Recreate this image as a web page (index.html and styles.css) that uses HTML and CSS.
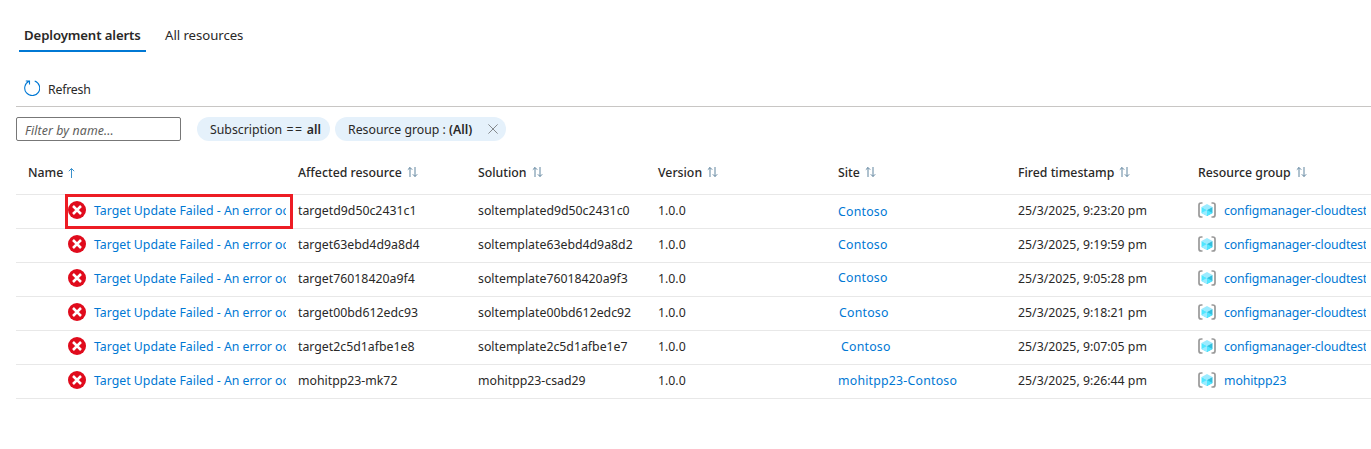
FILE: index.html
```
<!DOCTYPE html>
<html lang="en">
<head>
<meta charset="utf-8">
<title>Deployment alerts</title>
<link rel="stylesheet" href="styles.css">
</head>
<body>
<svg class="defs" aria-hidden="true">
  <defs>
    <symbol id="sort" viewBox="0 0 11 12"><path d="M3 11V1.5M.8 3.7 3 1.5 5.2 3.7M8 1v9.5M5.8 8.3 8 10.5 10.2 8.3" fill="none" stroke="currentColor"/></symbol>
    <symbol id="error" viewBox="0 0 18 18"><circle cx="9" cy="9" r="9" fill="#e00b1c"/><path d="m5 5 8 8M13 5l-8 8" stroke="#fff" stroke-width="2.5"/></symbol>
    <symbol id="group" viewBox="0 0 18 16"><path d="M4.5 1H3.2Q1 1 1 3v10q0 2 2.2 2h1.3M13.5 1h1.3Q17 1 17 3v10q0 2-2.2 2h-1.3" fill="none" stroke="#999" stroke-width="1.7"/><path d="m9 2 5.5 3L9 8 3.5 5z" fill="#9cebff"/><path d="M3.5 5 9 8v6l-5.500-3z" fill="#50e6ff"/><path d="M14.500 5 9 8v6l5.500-3z" fill="#32bedd"/><path d="m3.500 11 5.500-3v6z" fill="#9cebff"/><path d="m14.500 11-5.500-3v6z" fill="#50e6ff"/></symbol>
  </defs>
</svg>
<nav class="tabs">
  <a class="tab tab-active"><span>Deployment alerts</span></a>
  <a class="tab"><span>All resources</span></a>
</nav>
<div class="toolbar">
  <svg class="refresh-icon" viewBox="0 0 16 16"><path d="M10.7 1A7.5 7.5 0 1 1 5 1.300M1.800 1H5.500V4.600" fill="none" stroke="#0078d4" stroke-width="1.1"/></svg>
  <span class="refresh-label">Refresh</span>
</div>
<div class="filters">
  <div class="search"><span>Filter by name...</span></div>
  <div class="pill pill-sub"><span>Subscription <i class="op">==</i> <b>all</b></span></div>
  <div class="pill pill-group"><span>Resource group : <b>(All)</b></span><svg class="close" viewBox="0 0 10 10"><path d="m.4.4 9.2 9.2M9.6.4.4 9.6" stroke="#85898d"/></svg></div>
</div>
<main class="grid">
  <div class="row head">
    <div class="cell"><span>Name</span><svg class="sort-up" viewBox="0 0 7 12"><path d="M3.5 11V1.5M.8 4.2l2.7-2.7 2.7 2.7" fill="none" stroke="currentColor"/></svg></div>
    <div class="cell"><span>Affected resource</span><svg class="sort"><use href="#sort"/></svg></div>
    <div class="cell"><span>Solution</span><svg class="sort"><use href="#sort"/></svg></div>
    <div class="cell"><span>Version</span><svg class="sort"><use href="#sort"/></svg></div>
    <div class="cell"><span>Site</span><svg class="sort"><use href="#sort"/></svg></div>
    <div class="cell"><span>Fired timestamp</span><svg class="sort"><use href="#sort"/></svg></div>
    <div class="cell"><span>Resource group</span><svg class="sort"><use href="#sort"/></svg></div>
  </div>
  <div class="row">
    <div class="cell name"><svg class="error"><use href="#error"/></svg><a>Target Update Failed - An error oc</a></div>
    <div class="cell"><span>targetd9d50c2431c1</span></div>
    <div class="cell"><span>soltemplated9d50c2431c0</span></div>
    <div class="cell"><span>1.0.0</span></div>
    <div class="cell site drop"><a>Contoso</a></div>
    <div class="cell"><span>25/3/2025, 9:23:20 pm</span></div>
    <div class="cell group"><svg class="cube"><use href="#group"/></svg><a>configmanager-cloudtest</a></div>
    <div class="highlight"></div>
  </div>
  <div class="row">
    <div class="cell name"><svg class="error"><use href="#error"/></svg><a>Target Update Failed - An error oc</a></div>
    <div class="cell"><span>target63ebd4d9a8d4</span></div>
    <div class="cell"><span>soltemplate63ebd4d9a8d2</span></div>
    <div class="cell"><span>1.0.0</span></div>
    <div class="cell site"><a>Contoso</a></div>
    <div class="cell"><span>25/3/2025, 9:19:59 pm</span></div>
    <div class="cell group"><svg class="cube"><use href="#group"/></svg><a>configmanager-cloudtest</a></div>
  </div>
  <div class="row">
    <div class="cell name"><svg class="error"><use href="#error"/></svg><a>Target Update Failed - An error oc</a></div>
    <div class="cell"><span>target76018420a9f4</span></div>
    <div class="cell"><span>soltemplate76018420a9f3</span></div>
    <div class="cell"><span>1.0.0</span></div>
    <div class="cell site raise"><a>Contoso</a></div>
    <div class="cell"><span>25/3/2025, 9:05:28 pm</span></div>
    <div class="cell group"><svg class="cube"><use href="#group"/></svg><a>configmanager-cloudtest</a></div>
  </div>
  <div class="row">
    <div class="cell name"><svg class="error"><use href="#error"/></svg><a>Target Update Failed - An error oc</a></div>
    <div class="cell"><span>target00bd612edc93</span></div>
    <div class="cell"><span>soltemplate00bd612edc92</span></div>
    <div class="cell"><span>1.0.0</span></div>
    <div class="cell site indent-1"><a>Contoso</a></div>
    <div class="cell"><span>25/3/2025, 9:18:21 pm</span></div>
    <div class="cell group"><svg class="cube"><use href="#group"/></svg><a>configmanager-cloudtest</a></div>
  </div>
  <div class="row">
    <div class="cell name"><svg class="error"><use href="#error"/></svg><a>Target Update Failed - An error oc</a></div>
    <div class="cell"><span>target2c5d1afbe1e8</span></div>
    <div class="cell"><span>soltemplate2c5d1afbe1e7</span></div>
    <div class="cell"><span>1.0.0</span></div>
    <div class="cell site indent-3"><a>Contoso</a></div>
    <div class="cell"><span>25/3/2025, 9:07:05 pm</span></div>
    <div class="cell group"><svg class="cube"><use href="#group"/></svg><a>configmanager-cloudtest</a></div>
  </div>
  <div class="row">
    <div class="cell name"><svg class="error"><use href="#error"/></svg><a>Target Update Failed - An error oc</a></div>
    <div class="cell"><span>mohitpp23-mk72</span></div>
    <div class="cell"><span>mohitpp23-csad29</span></div>
    <div class="cell"><span>1.0.0</span></div>
    <div class="cell site"><a>mohitpp23-Contoso</a></div>
    <div class="cell"><span>25/3/2025, 9:26:44 pm</span></div>
    <div class="cell group"><svg class="cube"><use href="#group"/></svg><a>mohitpp23</a></div>
  </div>
</main>
</body>
</html>
```
FILE: styles.css
```
* { box-sizing: border-box; }
body {
  margin: 0;
  height: 449px;
  overflow: hidden;
  background: #fff;
  color: #292827;
  font: 12.3px/18px "Noto Sans", "Open Sans", sans-serif;
  white-space: nowrap;
}
svg { flex: none; display: block; }
.defs { position: absolute; width: 0; height: 0; }
.tabs { display: flex; gap: 14px; height: 52px; padding: 20px 0 0 19px; font-size: 13.2px; }
.tab { height: 32px; padding: 6px 5px 0; border-bottom: 2px solid transparent; letter-spacing: -.05px; }
.tab-active { width: 127px; border-color: #0078d4; font-weight: 600; letter-spacing: -.12px; }
.toolbar { display: flex; align-items: center; gap: 8px; height: 55px; margin-left: 16px; padding: 21px 0 0 8px; border-bottom: 1px solid #c8c6c4; }
.refresh-icon { width: 16px; height: 16px; margin-top: -3px; }
.refresh-label { letter-spacing: -.2px; }
.filters { display: flex; height: 44px; padding: 10px 0 0 16px; }
.search { width: 165px; height: 24px; padding: 4px 8px 0; border: 1px solid #777; border-radius: 2px; color: #605e5c; font-style: italic; letter-spacing: .12px; }
.pill { display: flex; align-items: center; height: 24px; padding-left: 13px; border-radius: 12px; background: #e5f1fb; }
.pill span { padding-top: 1px; }
.pill b { font-weight: 600; }
.op { font-style: normal; letter-spacing: 1.6px; margin-left: 1px; }
.pill-sub { width: 133px; margin-left: 16px; }
.pill-group { width: 171px; margin-left: 5px; }
.close { width: 10px; height: 10px; margin: 0 8px 0 auto; }
.grid { padding-left: 16px; }
.row { position: relative; display: grid; grid-template-columns: 270px repeat(6, 180px); height: 34px; border-bottom: 1px solid #e8e8e8; }
.head { height: 44px; font-weight: 500; }
.cell { display: flex; align-items: center; overflow: hidden; padding: 0 0 2px 12px; }
.cell a { color: #0078d4; }
.head .cell { gap: 5px; padding-bottom: 0; }
.sort { width: 11px; height: 12px; margin-top: -1px; color: #61859f; }
.sort-up { width: 7px; height: 12px; color: #3b91cc; }
.row .name { padding-left: 52px; gap: 8px; }
.error { width: 18px; height: 18px; margin-top: -1px; }
.group { gap: 8px; }
.group a { letter-spacing: -.11px; }
.cube { width: 18px; height: 16px; margin-top: -2px; }
.site a { letter-spacing: .22px; }
.cell.drop { padding-bottom: 0; }
.cell.raise { padding-bottom: 4px; }
.cell.indent-1 { padding-left: 13px; }
.cell.indent-3 { padding-left: 15px; }
.highlight { position: absolute; left: 49px; top: -1px; width: 228px; height: 35px; border: 3px solid #ed1c24; }
```
